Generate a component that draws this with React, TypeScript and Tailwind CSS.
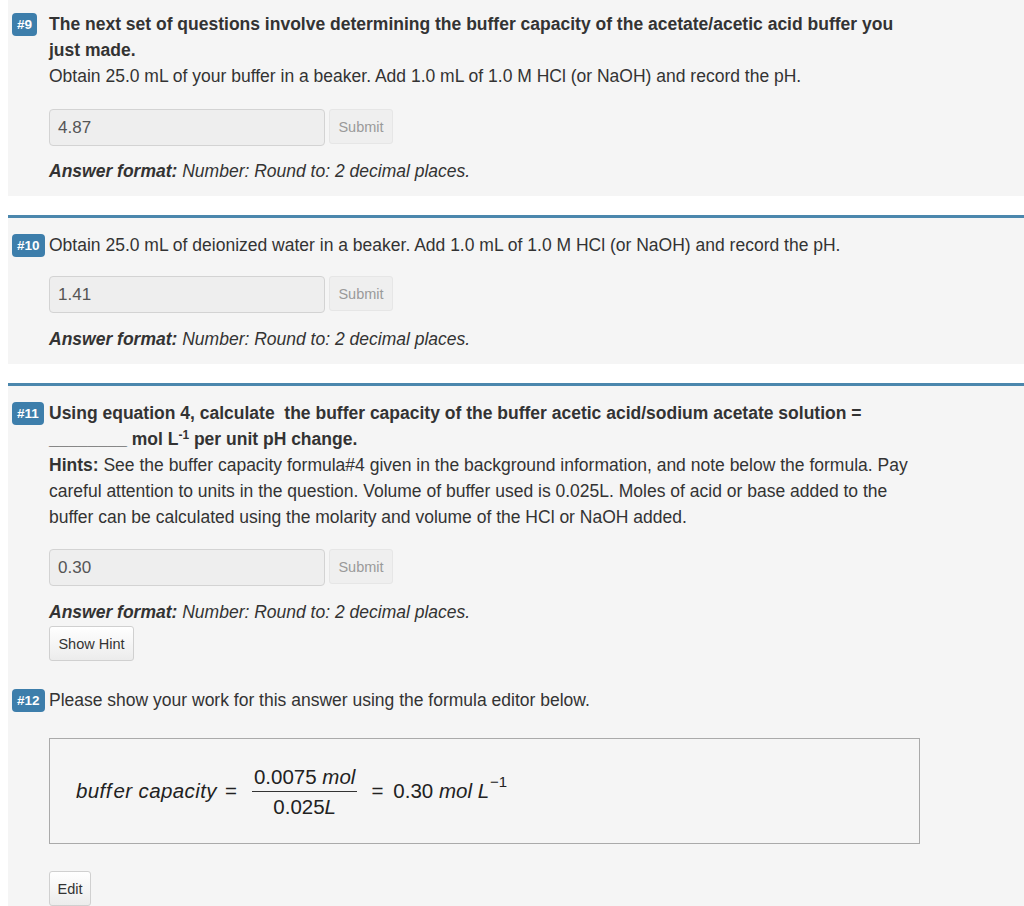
const font = { fontFamily: '"Liberation Sans", Arial, sans-serif' };

function Badge({ n }: { n: string }) {
  return (
    <span className="mt-[2px] inline-flex h-[23px] items-center rounded-[4px] bg-[#3d7eab] px-[5px] text-[13.5px] font-bold leading-none text-white">
      {n}
    </span>
  );
}

function Question({ n, children }: { n: string; children: React.ReactNode }) {
  return (
    <div className="flex">
      <div className="w-[41px] shrink-0 pl-[4px]">
        <Badge n={n} />
      </div>
      <div className="w-[872px] text-[17.5px] leading-[26px] text-[#333]">{children}</div>
    </div>
  );
}

function AnswerRow({ value, mt }: { value: string; mt: string }) {
  return (
    <div className={`flex items-start gap-[4px] ${mt}`}>
      <div className="flex h-[37px] w-[276px] items-center rounded-[4px] border border-[#d3d3d3] bg-[#eeeeee] pl-[8px] text-[17px] text-[#555]">
        {value}
      </div>
      <div className="flex h-[35px] w-[64px] items-center justify-center rounded-[3px] border border-[#e6e6e6] bg-[#efefef] text-[14.5px] text-[#9a9a9a]">
        Submit
      </div>
    </div>
  );
}

function AnswerFormat({ mt }: { mt: string }) {
  return (
    <p className={`${mt} italic`}>
      <b>Answer format:</b> Number: Round to: 2 decimal places.
    </p>
  );
}

function Button({ label, w }: { label: string; w: string }) {
  return (
    <div
      className={`flex h-[35px] ${w} items-center justify-center rounded-[3px] border border-[#d0d0d0] bg-gradient-to-b from-white to-[#ececec] text-[14.5px] text-[#333]`}
    >
      {label}
    </div>
  );
}

export default function App() {
  return (
    <div className="min-h-[906px] bg-white" style={font}>
      {/* #9 */}
      <section className="ml-[8px] bg-[#f5f5f5] pb-[12px] pt-[11px]">
        <Question n="#9">
          <p className="font-bold">
            The next set of questions involve determining the buffer capacity of the acetate/acetic acid buffer you
            just made.
          </p>
          <p>Obtain 25.0 mL of your buffer in a beaker. Add 1.0 mL of 1.0 M HCl (or NaOH) and record the pH.</p>
          <AnswerRow value="4.87" mt="mt-[20px]" />
          <AnswerFormat mt="mt-[12px]" />
        </Question>
      </section>

      {/* #10 */}
      <section className="ml-[8px] mt-[19px] border-t-[3px] border-[#4b87ad] bg-[#f5f5f5] pb-[12px] pt-[14px]">
        <Question n="#10">
          <p>Obtain 25.0 mL of deionized water in a beaker. Add 1.0 mL of 1.0 M HCl (or NaOH) and record the pH.</p>
          <AnswerRow value="1.41" mt="mt-[18px]" />
          <AnswerFormat mt="mt-[13px]" />
        </Question>
      </section>

      {/* #11 + #12 */}
      <section className="ml-[8px] mt-[19px] border-t-[3px] border-[#4b87ad] bg-[#f5f5f5] pt-[14px]">
        <Question n="#11">
          <p className="font-bold">
            Using equation 4, calculate&nbsp; the buffer capacity of the buffer acetic acid/sodium acetate solution =
            ________ mol L<sup className="text-[12px]">-1</sup> per unit pH change.
          </p>
          <p>
            <b>Hints:</b> See the buffer capacity formula#4 given in the background information, and note below the
            formula. Pay careful attention to units in the question. Volume of buffer used is 0.025L. Moles of acid or
            base added to the buffer can be calculated using the molarity and volume of the HCl or NaOH added.
          </p>
          <AnswerRow value="0.30" mt="mt-[19px]" />
          <AnswerFormat mt="mt-[13px]" />
          <div className="mt-[1px]">
            <Button label="Show Hint" w="w-[85px]" />
          </div>
        </Question>

        <div className="mt-[26px]">
          <Question n="#12">
            <p>Please show your work for this answer using the formula editor below.</p>
            <div className="mt-[25px] flex h-[106px] w-[871px] items-center border border-[#aaa] pl-[26px] text-[20.5px] text-[#222]">
              <span className="italic tracking-[0.4px]">
                buf<span className="tracking-[2px]">f</span>er capacity
              </span>
              <span className="ml-[8px] mr-[15px]">=</span>
              <span className="inline-flex flex-col items-center">
                <span className="px-[2px] leading-[29px]">
                  0.0075 <span className="italic">mol</span>
                </span>
                <span className="h-px w-full bg-[#333]" />
                <span className="leading-[29px]">
                  0.025<span className="italic">L</span>
                </span>
              </span>
              <span className="ml-[14px]">=</span>
              <span className="ml-[10px]">
                0.30 <span className="italic">mol L</span>
              </span>
              <span className="-mt-[18px] ml-[1px] text-[15px]">−1</span>
            </div>
            <div className="mt-[27px] pb-[4px]">
              <Button label="Edit" w="w-[42px]" />
            </div>
          </Question>
        </div>
      </section>
    </div>
  );
}
